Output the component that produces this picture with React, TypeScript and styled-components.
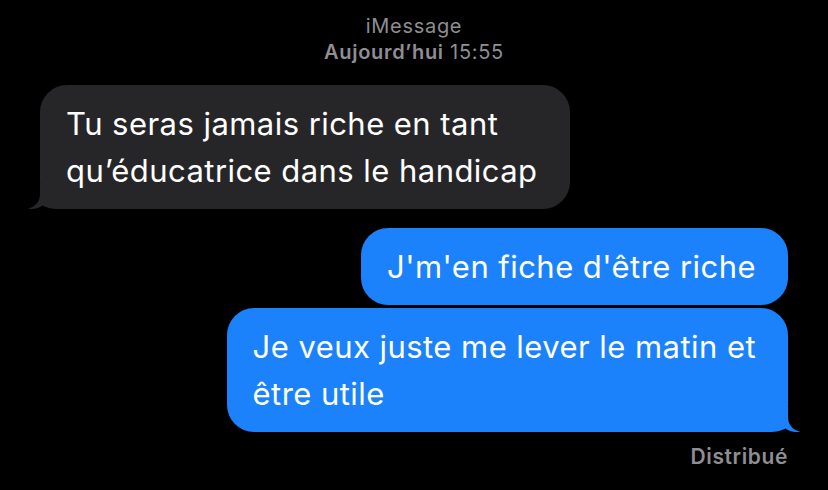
import React from "react";
import styled, { createGlobalStyle } from "styled-components";

const Global = createGlobalStyle`
  html, body { margin: 0; padding: 0; background: #000; }
  body { font-family: Inter, "Noto Sans", "Liberation Sans", sans-serif; -webkit-font-smoothing: antialiased; }
`;

const Screen = styled.div`
  width: 828px;
  height: 490px;
  background: #000;
  display: flex;
  flex-direction: column;
  padding: 13px 40px 0 40px;
  box-sizing: border-box;
  overflow: hidden;
`;

const Header = styled.div`
  display: flex;
  flex-direction: column;
  align-items: center;
  color: #8e8e93;
  font-size: 20px;
  line-height: 26px;
  letter-spacing: 0.7px;
  margin-bottom: 20px;
`;

const HeaderStrong = styled.span`
  font-weight: 600;
`;

const Row = styled.div<{ $mine?: boolean; $gap: number }>`
  display: flex;
  justify-content: ${(p) => (p.$mine ? "flex-end" : "flex-start")};
  margin-bottom: ${(p) => p.$gap}px;
`;

const Bubble = styled.div<{ $mine?: boolean }>`
  position: relative;
  background: ${(p) => (p.$mine ? "#1b82fc" : "#262628")};
  color: #fff;
  font-size: 31px;
  line-height: 47px;
  letter-spacing: 0.45px;
  padding: 15px 32px 15px 26px;
  border-radius: 27px;
  white-space: nowrap;
`;

const Tail = styled.svg<{ $mine?: boolean }>`
  position: absolute;
  bottom: 0;
  width: 43px;
  height: 25px;
  ${(p) => (p.$mine ? "right: -13px;" : "left: -13px; transform: scaleX(-1);")}
`;

const Status = styled.div`
  align-self: flex-end;
  color: #8e8e93;
  font-size: 21px;
  font-weight: 600;
  line-height: 26px;
  letter-spacing: 0.6px;
  margin-top: 12px;
`;

const BubbleTail: React.FC<{ mine?: boolean; color: string }> = ({ mine, color }) => (
  <Tail $mine={mine} viewBox="0 0 43 25">
    <path
      d="M0 0 L30 0 L30 10 C30 18 35 23 42.5 25 C36 25.6 31 24.2 27.5 21.5 C22 24.6 16 25 8 25 L0 25 Z"
      fill={color}
    />
  </Tail>
);

export default function App() {
  return (
    <>
      <Global />
      <Screen>
        <Header>
          <span>iMessage</span>
          <span>
            <HeaderStrong>Aujourd’hui</HeaderStrong> 15:55
          </span>
        </Header>
        <Row $gap={19}>
          <Bubble>
            Tu seras jamais riche en tant
            <br />
            qu’éducatrice dans le handicap
            <BubbleTail color="#262628" />
          </Bubble>
        </Row>
        <Row $mine $gap={3}>
          <Bubble $mine>J'm'en fiche d'être riche</Bubble>
        </Row>
        <Row $mine $gap={0}>
          <Bubble $mine>
            Je veux juste me lever le matin et
            <br />
            être utile
            <BubbleTail mine color="#1b82fc" />
          </Bubble>
        </Row>
        <Status>Distribué</Status>
      </Screen>
    </>
  );
}
